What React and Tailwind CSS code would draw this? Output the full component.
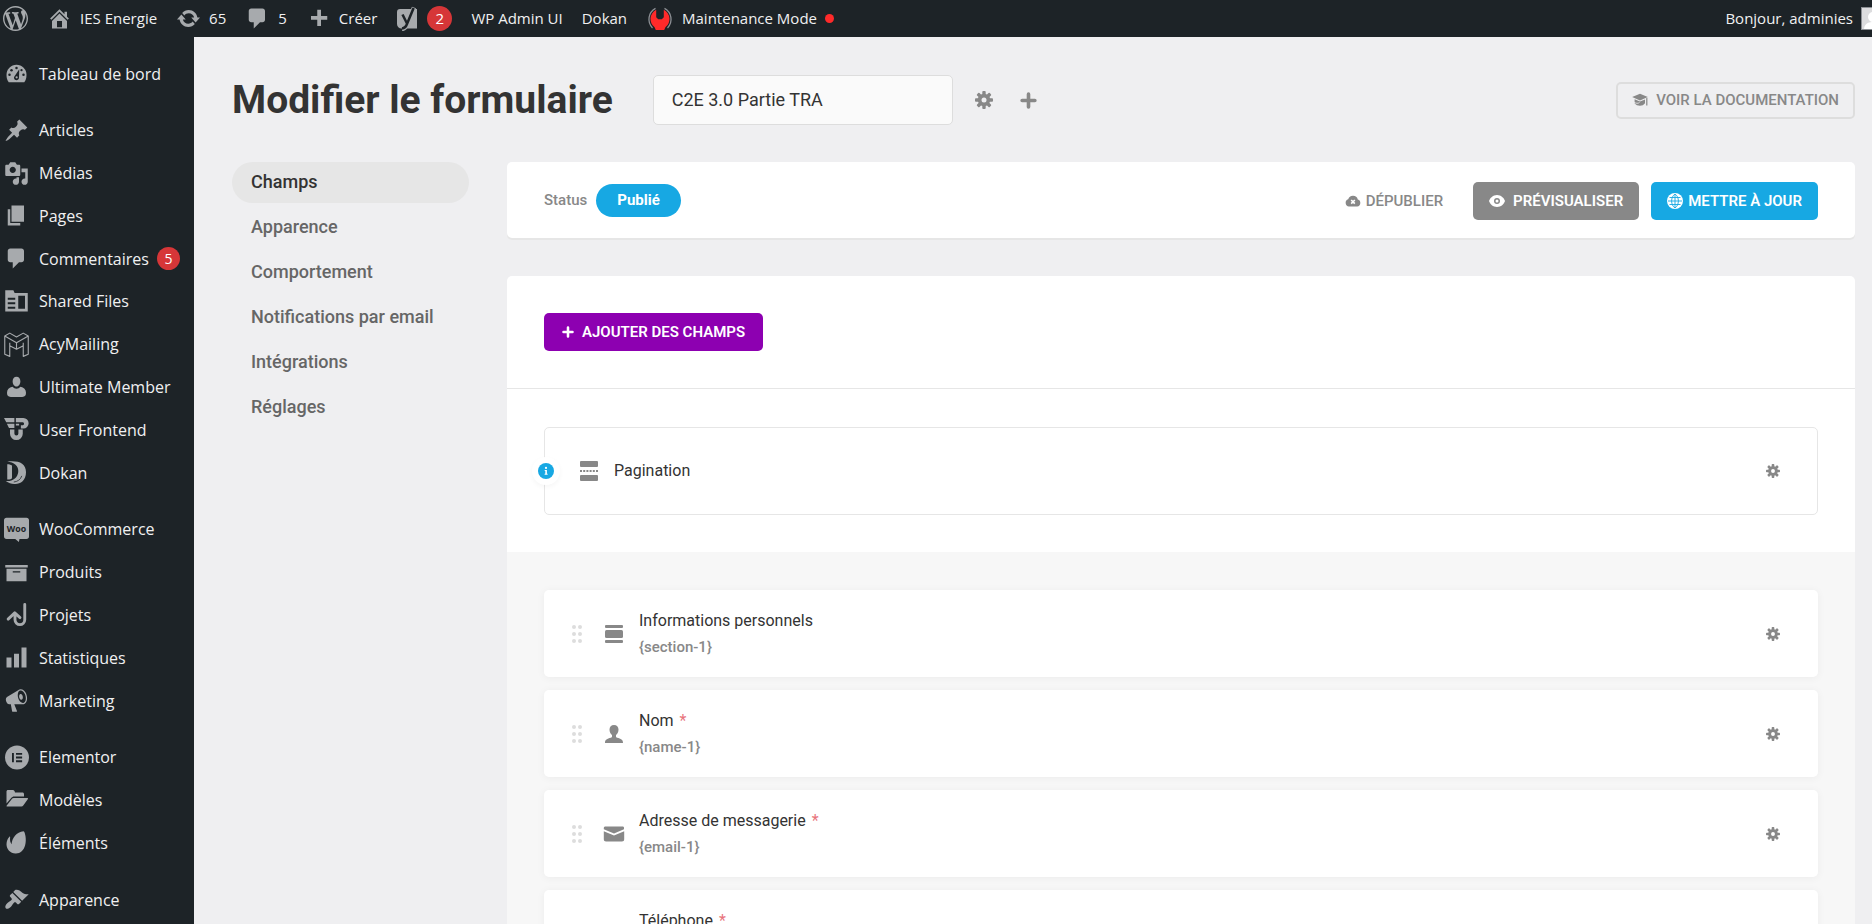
import React from "react";

function Dash({ d, children }) {
  return (
    <svg viewBox="0 0 20 20" className="size-[25px] shrink-0" fill="#a7aaad" aria-hidden="true">
      {d ? <path d={d} /> : null}
      {children}
    </svg>
  );
}

const P = {
  wordpress:
    "M20 10c0-5.51-4.49-10-10-10C4.48 0 0 4.49 0 10c0 5.52 4.48 10 10 10 5.51 0 10-4.48 10-10zM7.78 15.37L4.37 6.22c.55-.02 1.17-.08 1.17-.08.5-.06.44-1.13-.06-1.11 0 0-1.45.11-2.37.11-.18 0-.37 0-.58-.01C4.12 2.69 6.87 1.11 10 1.11c2.33 0 4.45.87 6.05 2.34-.68-.11-1.65.39-1.65 1.58 0 .74.45 1.36.9 2.1.35.61.55 1.36.55 2.46 0 1.49-1.4 5-1.4 5l-3.03-8.37c.54-.02.82-.17.82-.17.5-.05.44-1.25-.06-1.22 0 0-1.44.12-2.38.12-.87 0-2.33-.12-2.33-.12-.5-.03-.56 1.2-.06 1.22l.92.08 1.26 3.41zM17.41 10c.24-.64.74-1.87.43-4.25.7 1.29 1.05 2.71 1.05 4.25 0 3.29-1.73 6.24-4.4 7.78.97-2.59 1.94-5.2 2.92-7.78zM6.1 18.09C3.12 16.65 1.11 13.53 1.11 10c0-1.3.23-2.48.72-3.59C3.25 10.3 4.67 14.2 6.1 18.09zm4.03-6.63l2.58 6.98c-.86.29-1.76.45-2.71.45-.79 0-1.57-.11-2.29-.33.81-2.38 1.62-4.74 2.42-7.1z",
  home: "M16 8.5l1.53 1.53-1.06 1.06L10 4.6l-6.47 6.49-1.06-1.06L10 2.5l4 4v-2h2v4zm-6-2.46l6 5.99V18H4v-5.97zM12 17v-5H8v5h4z",
  update:
    "M10.2 3.28c3.53 0 6.43 2.61 6.92 6h2.08l-3.5 4-3.5-4h2.32c-.45-1.97-2.21-3.45-4.32-3.45-1.45 0-2.73.71-3.54 1.78L4.95 5.66C6.23 4.2 8.11 3.28 10.2 3.28zm-.4 13.44c-3.52 0-6.43-2.61-6.92-6H.8l3.5-4c1.17 1.33 2.33 2.67 3.5 4H5.48c.45 1.97 2.21 3.45 4.32 3.45 1.45 0 2.73-.71 3.54-1.78l1.71 1.95c-1.28 1.46-3.15 2.38-5.25 2.38z",
  comments: "M5 2h9c1.1 0 2 .9 2 2v7c0 1.1-.9 2-2 2h-2l-5 5v-5H5c-1.1 0-2-.9-2-2V4c0-1.1.9-2 2-2z",
  plus: "M17 8v3h-5v5H9v-5H4V8h5V3h3v5h5z",
  post: "M10.44 3.02l1.82-1.82 6.36 6.35-1.83 1.82c-1.05-.68-2.48-.57-3.41.36l-.75.75c-.92.93-1.04 2.35-.35 3.41l-1.83 1.82-2.41-2.41-2.8 2.79c-.42.42-3.38 2.71-3.8 2.29s1.86-3.39 2.28-3.81l2.79-2.79L4.1 9.36l1.83-1.82c1.05.69 2.48.57 3.4-.36l.75-.75c.93-.92 1.05-2.35.36-3.41z",
  media:
    "M13 11V4c0-.55-.45-1-1-1h-1.67L9 1H5L3.67 3H2c-.55 0-1 .45-1 1v7c0 .55.45 1 1 1h10c.55 0 1-.45 1-1zM7 4.5c1.38 0 2.5 1.12 2.5 2.5S8.38 9.5 7 9.5 4.5 8.38 4.5 7 5.62 4.5 7 4.5zM14 6h5v10.5c0 1.38-1.12 2.5-2.5 2.5S14 17.88 14 16.5s1.12-2.5 2.5-2.5c.17 0 .34.02.5.05V9h-3V6zm-4 8.05V13h2v3.5c0 1.38-1.12 2.5-2.5 2.5S7 17.88 7 16.5 8.12 14 9.5 14c.17 0 .34.02.5.05z",
  page: "M6 15V2h10v13H6zm-1 1h8v2H3V5h2v11z",
  archive: "M19 4v2H1V4h18zM2 7h16v10H2V7zm11 3V9H7v1h6z",
  chart: "M18 18V2h-4v16h4zm-6 0V7H8v11h4zm-6 0v-8H2v8h4z",
  megaphone:
    "M18.15 5.94c.46 1.62.38 3.22-.02 4.48-.42 1.28-1.26 2.18-2.3 2.48-.16.06-.26.06-.4.06-.06.02-.12.02-.18.02-.06.02-.14.02-.22.02h-6.8l2.22 5.5c.02.14-.06.26-.14.34-.08.1-.24.16-.34.16H6.95c-.1 0-.26-.06-.34-.16-.08-.08-.16-.2-.14-.34l-1-5.5H4.25l-.02-.02c-.5.06-1.08-.18-1.54-.62s-.88-1.08-1.06-1.88c-.24-.8-.2-1.56-.02-2.2.18-.62.58-1.08 1.06-1.3l.02-.02 9-5.4c.1-.06.18-.1.24-.16.06-.04.14-.08.24-.12.16-.08.28-.12.5-.18 1.04-.3 2.24.1 3.22.98s1.84 2.24 2.26 3.86zm-2.58 5.98h-.02c.4-.1.74-.34 1.04-.7.58-.7.86-1.76.86-3.04 0-.64-.1-1.3-.28-1.98-.34-1.36-1.02-2.5-1.78-3.24s-1.68-1.1-2.46-.88c-.82.22-1.4.96-1.7 2-.32 1.04-.28 2.36.06 3.72.38 1.36 1 2.5 1.8 3.24.78.74 1.62 1.1 2.48.88zm-2.54-7.08c.22-.04.42-.02.62.04.38.16.76.48 1.02 1s.42 1.2.42 1.78c0 .3-.04.56-.12.8-.18.48-.44.84-.86.94-.34.1-.8-.06-1.14-.4s-.64-.86-.78-1.5c-.18-.62-.12-1.24.02-1.72s.48-.84.82-.94z",
  appearance:
    "M14.48 11.06L7.41 3.99l1.5-1.5c.5-.56 2.3-.47 3.51.32 1.21.8 1.43 1.28 2.91 2.1 1.18.64 2.45 1.26 4.45.85zm-.71.71L6.7 4.7 4.93 6.47c-.39.39-.39 1.02 0 1.41l1.06 1.06c.39.39.39 1.03 0 1.42-.6.6-1.43 1.11-2.21 1.69-.35.26-.7.53-1.01.84C1.43 14.23.4 16.08 1.4 17.07c.99 1 2.84-.03 4.18-1.36.31-.31.58-.66.85-1.02.57-.78 1.08-1.61 1.69-2.21.39-.39 1.02-.39 1.41 0l1.06 1.06c.39.39 1.02.39 1.41 0z",
};

const Dashboard = () => (
  <Dash d="M3.76 17h12.48c1.34-1.63 1.76-3.74 1.76-6 0-4.42-3.58-8-8-8s-8 3.58-8 8c0 2.26.42 4.37 1.76 6z">
    <g fill="#1d2327">
      <circle cx="10" cy="5.6" r="1" />
      <circle cx="6" cy="7.3" r="1" />
      <circle cx="14" cy="7.3" r="0.9" />
      <circle cx="4.4" cy="11" r="1" />
      <circle cx="15.6" cy="11" r="1" />
      <path d="M12.2 6.6l-.2 6.6a2 2 0 1 1-3.7-.9z" />
    </g>
    <circle cx="10.1" cy="13" r="0.9" />
  </Dash>
);

const SharedFiles = () => (
  <Dash>
    <path
      fillRule="evenodd"
      d="M1 1h6.5l1 2.2H19V18H1zM3 7v1.6h6V7zm0 3.6v1.6h6v-1.6zm0 3.6v1.6h6v-1.6zM11.4 5.4v10.4h5.4V5.4z"
    />
  </Dash>
);

const Acy = () => (
  <Dash>
    <path
      fill="none"
      stroke="#a7aaad"
      strokeWidth="0.9"
      strokeLinejoin="round"
      d="M.6 3.2L4.6.9 10 4l5.4-3.1 4 2.3v14.6l-4 1.7V11L10 13.8 4.6 11v8.5l-4-1.7zM.6 3.2L10 8.6l9.4-5.4M10 8.6v5.2M4.6 11V8.5M15.4 11V8.5"
    />
  </Dash>
);

const Ultimate = () => (
  <Dash>
    <path d="M10 1.3c1.9 0 3.1 1.5 3.1 3.7S11.9 9.2 10 9.2 6.9 7.2 6.9 5 8.1 1.3 10 1.3zM6.8 9.4c.9 1 2 1.5 3.2 1.5s2.3-.5 3.2-1.500c2.7.5 4.4 2.3 4.4 4.8 0 2.2-.7 3.3-3 3.3H5.400c-2.300 0-3-1.100-3-3.300 0-2.500 1.700-4.300 4.400-4.800z" />
  </Dash>
);

const Frontend = () => (
  <Dash>
    <path d="M0 .8h8.3v3.4H1.8zM2.3 5.3h6v3.4H4zM9.5.8h6a4.200 4.200 0 0 1 0 8.400h-2V6.600h1.600a1.300 1.300 0 0 0 0-2.500H9.500z" />
    <path d="M9.500 5.300h2.600v1.500H9.500zM4.800 10h3.500v3.200a1.600 1.600 0 0 0 3.200 0V10H15v3.400a5.100 5.100 0 0 1-10.200 0z" />
  </Dash>
);

const DokanIcon = () => (
  <Dash>
    <path
      fillRule="evenodd"
      d="M2.600 1.200C11 .2 17.600 2 17.600 9.800c0 7-5 9.800-9.300 9.400-2.600-.1-4.600-.8-6.900-2.400 3.200.3 5-.4 7-1.900 3.600-2.500 4.200-8.400.8-11.200-1.600-1.400-4-2.100-6.600-2.500zM2.600 3.400c1.400 0 2.700.4 3.800 1V14c0 1-.8 1.500-2.200 1.600l-1.600-.1z"
    />
    <path d="M7.800 17.600c2.900-.2 5.600-2 6.400-4.900" stroke="#1d2327" strokeWidth="0.6" fill="none" />
  </Dash>
);

const Woo = () => (
  <Dash>
    <path d="M2 .6h16c1.200 0 2 .8 2 2v13c0 1.200-.8 2-2 2h-5.600l-.5 2.400-2.900-2.400H2c-1.200 0-2-.8-2-2v-13C0 1.400.8.600 2 .6z" />
    <text
      x="10"
      y="11.600"
      textAnchor="middle"
      fill="#1d2327"
      fontSize="7"
      fontWeight="700"
      fontFamily="Open Sans, sans-serif"
    >
      Woo
    </text>
  </Dash>
);

const Projects = () => (
  <Dash>
    <path
      d="M16.600 2v12.200a3.900 3.900 0 0 1-7.800 0V9.600M3.300 13.700l5.300-5 4.200 3.800"
      fill="none"
      stroke="#a7aaad"
      strokeWidth="2.300"
      strokeLinecap="round"
      strokeLinejoin="round"
    />
  </Dash>
);

const Elementor = () => (
  <Dash>
    <circle cx="10.400" cy="10" r="9.600" />
    <path fill="#1d2327" d="M6.400 6.300h1.500v7.400H6.400zM9.600 6.300h4.900v1.500H9.600zM9.600 9.250h4.900v1.500H9.600zM9.600 12.200h4.900v1.500H9.600z" />
  </Dash>
);

const Folder = () => (
  <Dash>
    <path d="M2 3.600c0-.8.500-1.300 1.300-1.300h3.600c.8 0 1.300.5 1.600 1.100l.3.900h5.900c.8 0 1.300.5 1.300 1.300v2H8.300c-1.200 0-2 .4-2.700 1.300L2 13.200z" />
    <path d="M8.400 8.800h10.200c.6 0 .8.500.4 1l-3.600 5c-.4.500-.8.700-1.500.7H2.600c-.6 0-.7-.4-.4-.8l3.900-5c.6-.7 1.300-.9 2.300-.9z" />
  </Dash>
);

const Leaf = () => (
  <Dash>
    <path d="M15.700.9c1.100.5 2.600 6.400 1.200 11.300-1.100 4.100-4 6.800-7.700 6.600C5 18.600 2 15.500 2 11.400c0-2.600 1-4.700 2.200-5.900.4-.4.800-.2.700.3-.3 2.200.1 4.300 1.200 5.500C6.300 6.500 9.900 1.400 15.700.9z" />
  </Dash>
);

const Yoast = () => (
  <svg viewBox="0 0 23 25" className="h-[25px] w-[23px] shrink-0" fill="none" aria-hidden="true">
    <path d="M4 3h17v19.500H5.500A4.500 4.500 0 0 1 1 18V6a3 3 0 0 1 3-3z" fill="#a7aaad" />
    <path d="M6.500 8.500l4.500 9M18 1.500l-7 16.500c-1 2.800-2.300 4.800-5 5" stroke="#a7aaad" strokeWidth="4.400" />
    <path d="M6.500 8.500l4.500 9M17.600 2l-6.600 16c-1 2.800-2.300 4.200-5 4.500" stroke="#1d2327" strokeWidth="2.500" />
  </svg>
);

const GROUPS = [
  { h: "auto-rows-[43px]", items: [["Tableau de bord", <Dashboard />]] },
  {
    h: "h-[385px] auto-rows-fr",
    items: [
      ["Articles", <Dash d={P.post} />],
      ["Médias", <Dash d={P.media} />],
      ["Pages", <Dash d={P.page} />],
      ["Commentaires", <Dash d={P.comments} />, "5"],
      ["Shared Files", <SharedFiles />],
      ["AcyMailing", <Acy />],
      ["Ultimate Member", <Ultimate />],
      ["User Frontend", <Frontend />],
      ["Dokan", <DokanIcon />],
    ],
  },
  {
    h: "h-[214px] auto-rows-fr",
    items: [
      ["WooCommerce", <Woo />],
      ["Produits", <Dash d={P.archive} />],
      ["Projets", <Projects />],
      ["Statistiques", <Dash d={P.chart} />],
      ["Marketing", <Dash d={P.megaphone} />],
    ],
  },
  {
    h: "h-[128px] auto-rows-fr",
    items: [
      ["Elementor", <Elementor />],
      ["Modèles", <Folder />],
      ["Éléments", <Leaf />],
    ],
  },
  { h: "auto-rows-[43px]", items: [["Apparence", <Dash d={P.appearance} />]] },
];

function AdminBar() {
  return (
    <header className="flex h-[37px] shrink-0 items-center justify-between overflow-hidden bg-[#1d2327] text-[15px] text-[#f0f0f1]">
      <nav className="flex items-center gap-[19px] pl-[3px] whitespace-nowrap">
        <a href="#" aria-label="WordPress">
          <Dash d={P.wordpress} />
        </a>
        <a href="#" className="flex items-center gap-2">
          <Dash d={P.home} />
          IES Energie
        </a>
        <a href="#" className="flex items-center gap-2">
          <Dash d={P.update} />
          65
        </a>
        <a href="#" className="flex items-center gap-2">
          <Dash d={P.comments} />5
        </a>
        <a href="#" className="flex items-center gap-2">
          <Dash d={P.plus} />
          Créer
        </a>
        <a href="#" className="flex items-center gap-2">
          <Yoast />
          <span className="flex size-[25px] items-center justify-center rounded-full bg-[#d63638] text-white">
            2
          </span>
        </a>
        <a href="#">WP Admin UI</a>
        <a href="#">Dokan</a>
        <a href="#" className="flex items-center gap-2">
          <svg viewBox="0 0 28 24" className="h-6 w-7" aria-hidden="true">
            <path
              d="M9.500 1.400A12.400 12.400 0 0 0 6.500 21M18.500 1.400A12.400 12.400 0 0 1 21.500 21"
              fill="none"
              stroke="#8c8f94"
              strokeWidth="1.300"
            />
            <path
              d="M10.200 2.800v7.400l2 2h3.600l2-2V2.800a10.300 10.300 0 0 1 1.600 17.400L18.200 23H9.800l-1.200-2.800A10.300 10.300 0 0 1 10.200 2.800z"
              fill="#ff2a2a"
            />
          </svg>
          <span>Maintenance Mode</span>
          <span className="size-[9px] rounded-full bg-[#ff2a2a]" />
        </a>
      </nav>
      <a href="#" className="flex items-center gap-2 whitespace-nowrap">
        Bonjour, adminies
        <span className="h-[23px] w-[11px] overflow-hidden border border-r-0 border-[#8c8f94] bg-[#dcdcde]">
          <svg viewBox="0 0 22 22" className="size-[22px]" fill="#fff" aria-hidden="true">
            <circle cx="11" cy="9" r="5" />
            <path d="M2 22c0-6 4-8 9-8s9 2 9 8z" />
          </svg>
        </span>
      </a>
    </header>
  );
}

function Sidebar() {
  return (
    <aside className="flex w-[194px] shrink-0 flex-col gap-[14px] overflow-hidden bg-[#1d2327] pt-[15px] text-base text-[#f0f0f1]">
      {GROUPS.map((g, i) => (
        <ul key={i} className={`grid shrink-0 ${g.h}`}>
          {g.items.map(([label, icon, badge]) => (
            <li key={label} className="flex">
              <a href="#" className="flex w-full items-center gap-[10px] pl-1 whitespace-nowrap">
                {icon}
                <span>{label}</span>
                {badge ? (
                  <span className="-ml-[2px] flex size-[23px] items-center justify-center rounded-full bg-[#d63638] text-sm text-white">
                    {badge}
                  </span>
                ) : null}
              </a>
            </li>
          ))}
        </ul>
      ))}
    </aside>
  );
}

function Gear({ className }) {
  return (
    <svg viewBox="0 0 18 18" className={className} fill="#888" aria-hidden="true">
      {[0, 45, 90, 135].map((a) => (
        <rect key={a} x="7.300" y="0" width="3.400" height="18" rx="0.900" transform={`rotate(${a} 9 9)`} />
      ))}
      <circle cx="9" cy="9" r="6.200" />
      <circle cx="9" cy="9" r="2.500" className="fill-white" />
    </svg>
  );
}

function Plus({ className }) {
  return (
    <svg viewBox="0 0 16 16" className={className} aria-hidden="true">
      <path d="M8 2v12M2 8h12" stroke="currentColor" strokeWidth="3.400" strokeLinecap="round" />
    </svg>
  );
}

function Grip() {
  return (
    <svg viewBox="0 0 12 20" className="h-5 w-3" fill="#ddd" aria-hidden="true">
      {[3, 10, 17].map((y) => (
        <React.Fragment key={y}>
          <circle cx="3" cy={y} r="2" />
          <circle cx="9" cy={y} r="2" />
        </React.Fragment>
      ))}
    </svg>
  );
}

const SectionIcon = () => (
  <svg viewBox="0 0 22 22" className="size-[22px]" fill="#888" aria-hidden="true">
    <rect x="2" y="2" width="18" height="3" rx="1" />
    <rect x="2" y="7" width="18" height="8" rx="1.500" />
    <rect x="2" y="17" width="18" height="3" rx="1" />
  </svg>
);

const PersonIcon = () => (
  <svg viewBox="0 0 22 22" className="size-[22px]" fill="#888" aria-hidden="true">
    <path d="M11 2c2.800 0 4.500 1.900 4.500 4.500 0 2.400-1 4.600-2.500 5.500v1.400c0 .7.400 1 1.200 1.300 3.600 1 5.800 1.600 5.800 5.300H2c0-3.700 2.200-4.300 5.800-5.300.8-.3 1.200-.6 1.200-1.300V12c-1.500-.9-2.500-3.100-2.500-5.500C6.500 3.900 8.200 2 11 2z" />
  </svg>
);

const MailIcon = () => (
  <svg viewBox="0 0 22 22" className="size-[22px]" fill="#888" aria-hidden="true">
    <path d="M2.500 3.500h17c1 0 1.500.6 1.500 1.400v1.400L11 10.600.8 6.300V4.900c0-.8.700-1.400 1.700-1.400z" />
    <path d="M.8 8.200L11 12.500l10.200-4.300V16.300c0 1.400-.9 2.200-2.200 2.200H3c-1.300 0-2.200-.8-2.200-2.200z" />
  </svg>
);

const PhoneIcon = () => (
  <svg viewBox="0 0 22 22" className="size-[22px]" fill="#888" aria-hidden="true">
    <path d="M5 2l4 5-2 2.500c1 2 3 4 5.500 5.500L15 13l5 4-2.500 3C9 20 2 13 2 4.500z" />
  </svg>
);

const FIELDS = [
  { title: "Informations personnels", id: "{section-1}", icon: <SectionIcon /> },
  { title: "Nom", id: "{name-1}", icon: <PersonIcon />, required: true },
  { title: "Adresse de messagerie", id: "{email-1}", icon: <MailIcon />, required: true },
  { title: "Téléphone", id: "{phone-1}", icon: <PhoneIcon />, required: true },
];

const TABS = ["Champs", "Apparence", "Comportement", "Notifications par email", "Intégrations", "Réglages"];

export default function App() {
  return (
    <div className="flex h-screen flex-col overflow-hidden bg-[#efeff1] font-['Open_Sans','Noto_Sans',sans-serif]">
      <AdminBar />
      <div className="flex min-h-0 flex-1">
        <Sidebar />
        <main className="min-w-0 flex-1 overflow-hidden pt-[38px] pr-[17px] pl-[38px] font-[Roboto,sans-serif] text-[#333]">
          <div className="flex items-center">
            <h1 className="text-[39px] leading-[50px] font-bold whitespace-nowrap">Modifier le formulaire</h1>
            <input
              aria-label="Nom du formulaire"
              defaultValue="C2E 3.0 Partie TRA"
              className="ml-10 h-[50px] w-[300px] rounded-[5px] border border-[#ddd] bg-[#fafafa] px-[18px] pb-[2px] text-[18px]"
            />
            <button type="button" aria-label="Réglages du formulaire" className="ml-[22px]">
              <Gear className="size-[18px] [&_.fill-white]:fill-[#efeff1]" />
            </button>
            <button type="button" aria-label="Nouveau formulaire" className="ml-[27px] text-[#888]">
              <Plus className="size-[17px]" />
            </button>
            <a
              href="#"
              className="ml-auto flex h-[37px] items-center gap-2 rounded-[5px] border-2 border-[#ddd] px-[14px] text-[15px] font-medium whitespace-nowrap text-[#888]"
            >
              <svg viewBox="0 0 16 14" className="h-[14px] w-4" fill="#888" aria-hidden="true">
                <path d="M8 .8l7.800 3.300L8 7.500.2 4.100z" />
                <path d="M2.600 6.300L8 8.600l5-2.200v3.800C11.800 11.900 10 12.700 8 12.700s-4.300-.8-5.400-2.500z" />
                <path d="M14.200 5.200l1.200-.5v7.800h-1.200z" />
                <path d="M2 9.200c2 1.300 4 1.500 5.500.3" fill="none" stroke="#efeff1" strokeWidth="0.800" />
              </svg>
              VOIR LA DOCUMENTATION
            </a>
          </div>

          <div className="mt-[37px] flex gap-[38px]">
            <nav className="flex w-[237px] shrink-0 flex-col gap-1 text-[18px] font-medium">
              {TABS.map((t, i) => (
                <a
                  key={t}
                  href="#"
                  className={`flex h-[41px] items-center rounded-full px-[19px] pb-[2px] whitespace-nowrap ${
                    i === 0 ? "bg-[#e6e6e6] text-[#333]" : "text-[#666]"
                  }`}
                >
                  {t}
                </a>
              ))}
            </nav>

            <div className="min-w-0 flex-1">
              <section className="flex h-[76px] items-center rounded-[5px] bg-white px-[37px] text-[15px] shadow-[0_2px_0_#e6e6e6]">
                <span className="font-medium text-[#888]">Status</span>
                <span className="ml-[9px] flex h-[33px] items-center rounded-full bg-[#17a8e3] px-[21px] font-bold text-white">
                  Publié
                </span>
                <div className="ml-auto flex items-center pt-[2px] font-medium whitespace-nowrap">
                  <button type="button" className="mr-[30px] flex items-center gap-[5px] text-[#888]">
                    <svg viewBox="0 0 16 12" className="h-3 w-4" aria-hidden="true">
                      <path
                        d="M4 11.500a3.700 3.700 0 0 1-.8-7.200A5 5 0 0 1 12.800 4.500a3.600 3.600 0 0 1-.6 7z"
                        fill="#888"
                      />
                      <path d="M6.200 5l3.600 3.600M9.800 5L6.200 8.600" stroke="#fff" strokeWidth="1.700" />
                    </svg>
                    DÉPUBLIER
                  </button>
                  <button
                    type="button"
                    className="mr-3 flex h-[38px] items-center gap-2 rounded-[5px] bg-[#888] px-4 font-semibold text-white"
                  >
                    <svg viewBox="0 0 16 12" className="h-3 w-4" aria-hidden="true">
                      <path d="M8 0c4 0 7 3 8 6-1 3-4 6-8 6S1 9 0 6c1-3 4-6 8-6z" fill="#fff" />
                      <circle cx="8" cy="6" r="3" fill="#888" />
                      <circle cx="8" cy="6" r="1.500" fill="#fff" />
                    </svg>
                    PRÉVISUALISER
                  </button>
                  <button
                    type="button"
                    className="flex h-[38px] items-center gap-[5px] rounded-[5px] bg-[#17a8e3] px-4 font-semibold text-white"
                  >
                    <svg viewBox="0 0 16 16" className="size-4" aria-hidden="true">
                      <circle cx="8" cy="8" r="8" fill="#fff" />
                      <path
                        d="M8 1v14M1 8h14M2.500 4.500h11M2.500 11.500h11M8 1C3.500 4 3.500 12 8 15M8 1c4.500 3 4.500 11 0 14"
                        stroke="#17a8e3"
                        strokeWidth="0.900"
                        fill="none"
                      />
                    </svg>
                    METTRE À JOUR
                  </button>
                </div>
              </section>

              <section className="mt-[38px] rounded-t-[5px] bg-white">
                <div className="border-b border-[#e6e6e6] px-[37px] py-[37px]">
                  <button
                    type="button"
                    className="flex h-[38px] items-center gap-2 rounded-[5px] bg-[#8d00b1] px-[18px] text-[15px] font-semibold whitespace-nowrap text-white"
                  >
                    <Plus className="size-3" />
                    AJOUTER DES CHAMPS
                  </button>
                </div>
                <div className="px-[37px] pt-[38px] pb-[37px]">
                  <div className="relative flex h-[88px] items-center rounded-[5px] border border-[#e6e6e6] pr-[37px] pl-[35px]">
                    <span className="absolute top-1/2 -left-[13px] flex size-7 -translate-y-1/2 items-center justify-center rounded-full bg-white shadow-[0_2px_5px_rgba(0,0,0,0.04)]">
                      <svg viewBox="0 0 16 16" className="size-4" aria-hidden="true">
                        <circle cx="8" cy="8" r="8" fill="#17a8e3" />
                        <circle cx="8" cy="4.900" r="1.100" fill="#fff" />
                        <path d="M6.700 7h2.200v3.700h.7v1H6.600v-1h.7V8h-.6z" fill="#fff" />
                      </svg>
                    </span>
                    <svg viewBox="0 0 18 20" className="h-5 w-[18px]" fill="#888" aria-hidden="true">
                      <rect width="18" height="6" rx="1" />
                      <rect y="14" width="18" height="6" rx="1" />
                      <path d="M0 10h18" stroke="#888" strokeWidth="2" strokeDasharray="2 1.200" />
                    </svg>
                    <span className="ml-4 text-base">Pagination</span>
                    <button type="button" aria-label="Réglages Pagination" className="ml-auto">
                      <Gear className="size-[14px]" />
                    </button>
                  </div>
                </div>
                <ul className="flex flex-col gap-[13px] bg-[#f7f7f7] px-[37px] py-[38px]">
                  {FIELDS.map((f) => (
                    <li
                      key={f.title}
                      className="flex h-[87px] items-center rounded-[5px] bg-white pr-[38px] pl-[27px] shadow-[0_1px_8px_rgba(0,0,0,0.05)]"
                    >
                      <Grip />
                      <span className="ml-5">{f.icon}</span>
                      <div className="ml-[14px]">
                        <p className="text-base leading-6">
                          {f.title}
                          {f.required ? <span className="ml-[6px] text-[#e8747c]">*</span> : null}
                        </p>
                        <p className="mt-[2px] text-[15px] leading-6 font-medium text-[#888]">{f.id}</p>
                      </div>
                      <button type="button" aria-label={`Réglages ${f.title}`} className="ml-auto">
                        <Gear className="size-[14px]" />
                      </button>
                    </li>
                  ))}
                </ul>
              </section>
            </div>
          </div>
        </main>
      </div>
    </div>
  );
}
